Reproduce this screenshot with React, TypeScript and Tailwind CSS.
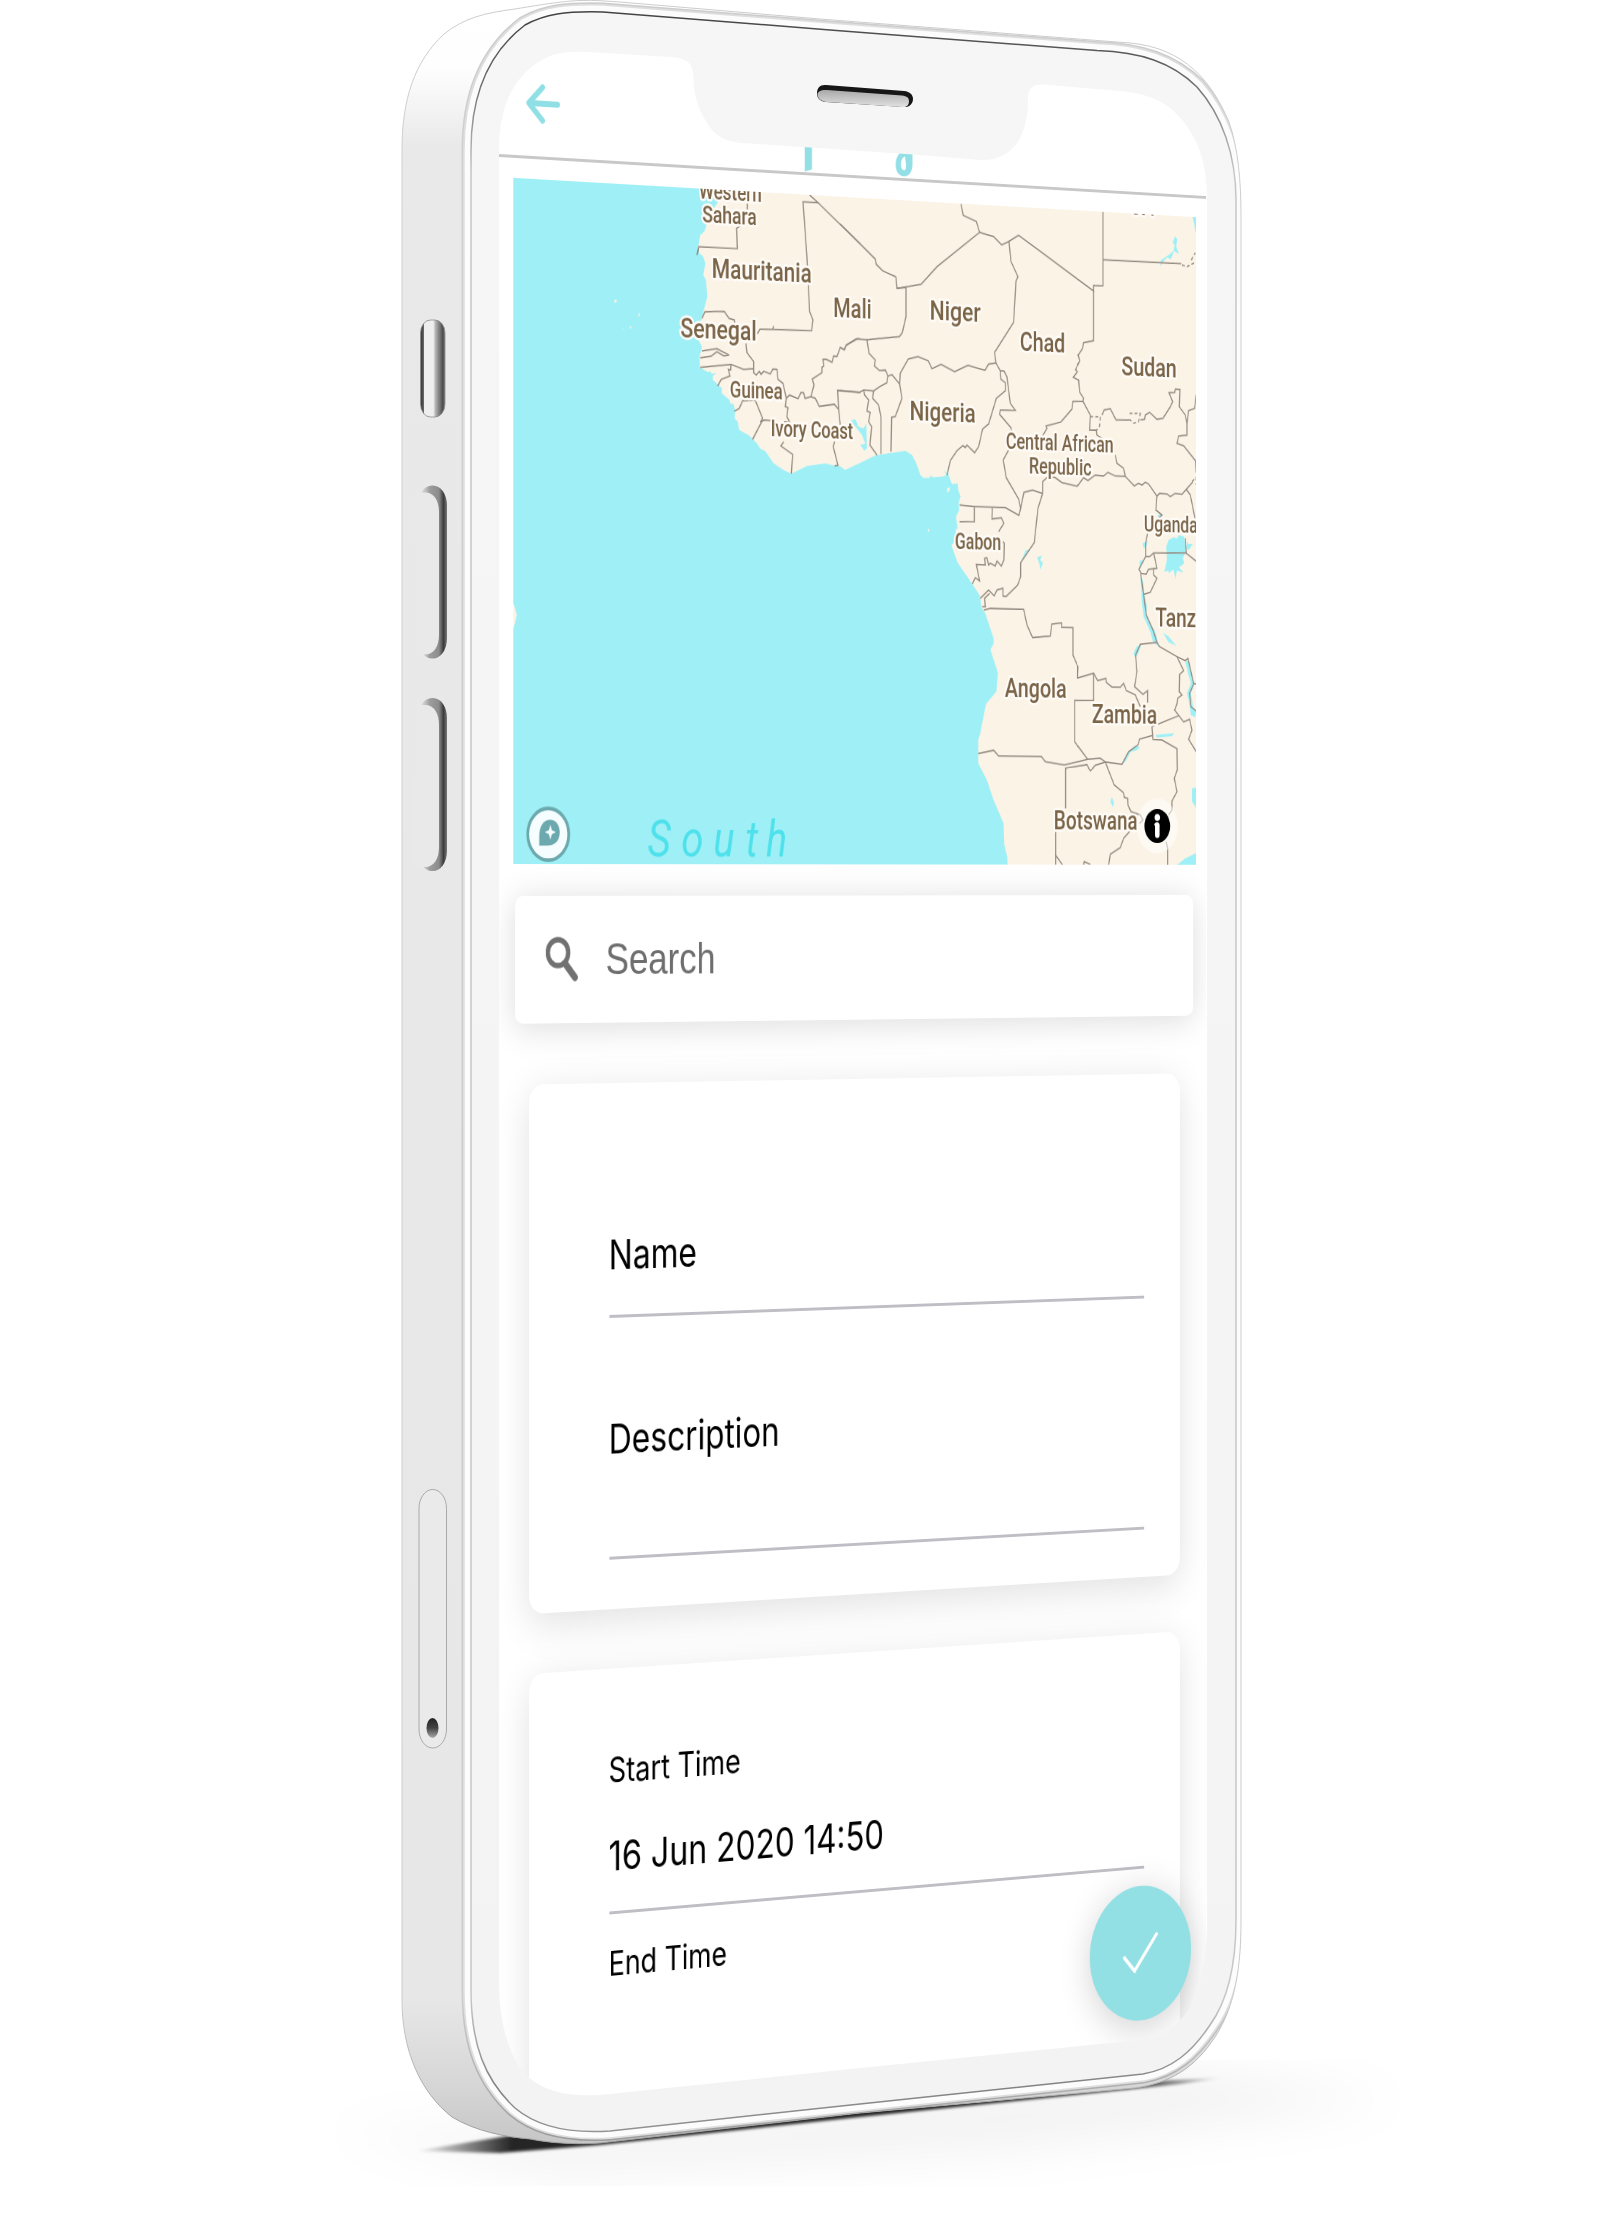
import React from 'react';

/* The screen is a flat 943px wide sheet, turned away from the viewer by one projective matrix. */
const SCREEN_LEFT = 499;
const HORIZON = 878;
const SCALE_X = 0.796;
const DEPTH = 0.00006543;

/* Page position -> position on the flat sheet. */
function flat(px: number, py: number): [number, number] {
  const d = px - SCREEN_LEFT;
  const x = d / (SCALE_X - DEPTH * d);
  const w = 1 + DEPTH * x;
  return [x, HORIZON + (py - HORIZON) * w];
}

type Tile = { x: number; y: number };
const WEST: Tile = { x: 500, y: 170 };
const NORTH: Tile = { x: 840, y: 180 };
const SOUTH: Tile = { x: 860, y: 480 };

/* Tile coordinates are thirds of a pixel from the tile's origin. */
function pts(tile: Tile, list: string): string {
  return list
    .trim()
    .split(/\s+/)
    .map((p) => {
      const [a, b] = p.split(',').map(Number);
      const [x, y] = flat(tile.x + a / 3, tile.y + b / 3);
      return `${x.toFixed(1)},${y.toFixed(1)}`;
    })
    .join(' ');
}

const LAND = [
  pts(WEST, '660,40 656,92 630,130 612,185 600,195 593,230 597,250 608,258 615,280 609,315 617,330 621,380 608,430 590,500 605,530 598,560 599,592 622,606 630,604 635,612 648,608 638,618 638,630 655,645 665,655 664,670 688,690 690,700 700,703 704,722 703,745 712,755 717,780 728,786 745,795 770,820 780,836 795,843 820,880 850,900 873,911 920,888 975,880 1000,886 1018,888 1035,900 1080,876'),
  pts(NORTH, '20,868 105,826 195,812 215,825 228,850 240,885 250,894 268,894 270,886 278,892 305,890 318,886 310,870 325,885 335,912 352,910 354,930 361,950 355,970 357,990 347,1010 352,1045'),
  pts(SOUTH, '286,150 288,180 273,195 292,248 335,310 358,345 365,385 375,400 400,475 400,492 390,508 413,578 408,635 377,672 360,760 354,780 354,850 380,900 400,960 430,1030 432,1095 441,1130 442,1170 1030,1170'),
  pts(NORTH, '1090,40'),
].join(' ');

const BORDERS: [Tile, string[]][] = [
  [WEST, [
    '741,55 741,120',
    '740,150 738,155 709,175 711,236 595,230 590,255',
    '928,75 953,98 908,95 920,260 928,425 938,450 934,482 820,478 779,478 772,490 765,480',
    '817,478 820,468',
    '953,98 1080,222',
    '605,445 614,425 672,424 686,445 702,450 703,462',
    '737,520 740,548 760,575 760,608 768,615 777,604 782,613 790,604 810,612 818,597 830,598 833,628 848,640 858,685 868,675 893,686 902,668 910,668 914,685 932,680 945,685 957,709 1002,703 1015,718',
    '600,592 692,583 730,598 760,596',
    '692,583 691,600 684,598 689,618 663,628 652,648',
    '605,543 650,536 686,555 670,557 650,545 632,559 600,563',
    '932,680 941,645 936,627 965,608 965,592 970,588 968,568 978,568 995,577 1000,558 1010,560 1020,532 1032,540 1038,526 1072,506 1080,507',
    '1080,668 1012,661 1015,718 1020,765',
    '1003,815 999,830 1013,886 1003,888',
    '702,724 717,715 727,692 765,691 787,745 780,757 792,750 812,752',
    '787,750 757,808',
    '858,683 855,710 863,713 860,740 868,757 852,755',
    '850,815 842,828 877,853 873,911',
  ]],
  [NORTH, [
    '0,132 105,237 108,253 127,272 167,291 170,325 242,313 290,260 418,157 408,124 369,106 362,72',
    '0,503 12,508 18,495 48,476 80,479',
    '170,325 197,322 197,410 186,458 177,470 80,479 86,520 105,540 102,558 118,572 135,570 143,588 140,608 118,620 100,633 70,630 58,637 0,632',
    '143,588 155,584 178,612 180,580 204,537 233,530 264,542 275,566 302,553 343,575 383,556 434,571 445,552 467,549 463,517 520,427 527,303 533,290 512,244 506,184 484,195 460,170 418,157',
    '506,184 535,166 760,333 760,317 788,317 788,95',
    '788,239 1023,251',
    '760,333 760,482 730,488 727,505 714,525 718,542 706,570 712,575 699,592 715,600 718,636 730,655 728,664 698,664 695,687 662,726 617,738 620,745 605,770',
    '467,549 480,572 491,573 500,590 510,670 525,691 480,690 478,703 512,743 515,765',
    '480,572 482,598 495,608 495,632 468,655 445,732 427,747 415,800 403,818 380,795 375,803 368,797 350,812 330,842 320,886',
    '178,612 185,655 165,710 154,712 152,815',
    '100,633 97,655 115,675 122,712 122,822',
    '70,630 73,645 85,660 80,693 90,697 85,725 94,740 89,795 110,825',
    '505,810 489,840 498,893 535,957 541,985 551,937 577,930 607,940',
    '541,985 536,1006 495,983 400,980 358,975',
    '358,1025 402,1025 402,982',
    '456,984 455,1017 483,1013 491,1030 475,1055',
    '607,940 607,905 625,888 645,893 665,908 711,919 730,893 743,902 765,885 790,888 803,877 825,888 855,889 850,865 830,850 825,825',
    '728,664 750,705 748,750 768,750 770,765 785,775',
    '785,705 792,690 810,686 827,720 868,720',
    '900,720 913,718 915,705 928,697 950,718 968,715 990,680 997,665 986,638 1003,638 1005,627 1019,628 1017,680 1035,705 1040,730 1040,765 1015,768 1010,790 1030,797 1066,843 1068,878',
    '1040,730 1045,692 1063,685 1068,645',
    '855,889 882,918 895,910 905,915 915,907 925,912 950,948 958,940 980,942 990,950 1005,940 1025,943 1038,928 1058,905',
    '1038,928 1050,945 1064,1015',
    '950,948 947,990 965,1005 955,1015',
  ]],
  [SOUTH, [
    '975,175 978,220 1008,244',
    '880,219 978,219',
    '862,160 856,190 856,230 868,230 880,219 890,265 864,268 858,283 843,280 836,268 856,230',
    '880,268 880,285 890,295 870,337 850,343',
    '841,280 850,343 858,405 878,450 890,487 898,500 950,530 975,542 983,535 1000,610 1008,612',
    '890,487 840,493 826,525 830,575 823,620 848,643 862,632 862,668',
    '950,530 970,572 958,583 957,635 965,645 952,655 950,672 943,690 970,726 988,718 995,750 985,778 1008,815',
    '1000,612 988,640 992,680 1008,693',
    '955,707 875,740 878,778 905,780 950,806 951,870 942,895 950,935 935,963 935,990 925,1005',
    '878,766 838,777 833,795 805,815 785,853 735,846 762,915 790,938 792,952 802,955 803,975 812,995 840,1005 848,1020 838,1030',
    '810,1052 790,1075 780,1103 750,1123 745,1155',
    '918,1085 922,1105 922,1155',
    '371,390 390,385 490,388 500,435 517,473 570,468 575,432 604,429 604,442 638,443 638,525 653,560 652,594 700,580 700,661 643,661 643,785 682,838',
    '700,580 712,602 737,595 738,607 755,621 780,622 790,610 798,632 825,645 840,680',
    '354,821 400,811 415,828 543,829 555,845 612,855 682,838 720,835 735,846',
    '616,985 616,865 680,854 690,873 705,856 735,846',
    '586,1055 586,1155',
    '586,1125 607,1155',
    '670,1155 672,1145 690,1153',
    '547,40 533,85 522,188 481,248 481,290 472,315 437,350 428,348 428,325 410,330 402,348 385,330 360,355',
    '388,340 373,355 375,380 366,380',
    '428,185 432,190 431,240 423,258 410,243 405,258 390,250 385,255 380,233 373,235 375,255 348,253 358,303 345,293 336,312',
  ]],
];

const DASHED: [Tile, string][] = [
  [NORTH, '750,710 780,710 778,738 768,752'],
  [NORTH, '868,700 900,700 895,725 880,730 868,718'],
  [NORTH, '1025,255 1040,260 1060,250 1068,252'],
  [NORTH, '1053,240 1065,218'],
  [NORTH, '1055,905 1068,892 1068,915'],
];

const WATER: [Tile, string][] = [
  [NORTH, '1055,100 1075,100 1075,175 1066,155'],
  [NORTH, '960,260 962,240 985,225 1000,212 1003,195 996,186 1000,182 1004,168 1011,178 1008,200 1016,222 1001,213 992,238 980,232 970,243'],
  [NORTH, '30,722 45,717 55,740 70,745 78,730 80,805 72,812 60,795 75,790 65,765 50,745'],
  [SOUTH, '918,200 925,180 940,172 950,176 955,165 972,170 976,215 968,235 972,250 956,262 970,278 950,272 945,298 940,268 925,280 925,272 912,275 920,240'],
  [SOUTH, '980,185 985,192 998,192 985,210 978,205'],
  [SOUTH, '530,232 545,226 540,240 548,248 540,270 537,250'],
  [SOUTH, '495,212 510,206 480,252'],
  [SOUTH, '840,290 848,300 852,340 860,380 858,405 870,430 885,455 897,502 878,485 870,455 850,410 845,370 843,330'],
  [SOUTH, '847,190 863,183 858,200 850,205'],
  [SOUTH, '838,243 850,238 838,272'],
  [SOUTH, '820,520 828,500 843,495 832,525 825,534'],
  [SOUTH, '975,542 985,545 995,590 1003,610 992,640 998,680 1008,695 1005,712 992,705 985,660 980,640 992,610 983,580'],
  [SOUTH, '908,458 925,470 948,497 925,487'],
  [SOUTH, '785,853 805,815 822,798 840,802 828,812 812,815 795,845'],
  [SOUTH, '885,765 942,760 935,769 890,773'],
  [SOUTH, '755,952 762,970 757,980 750,965'],
  [SOUTH, '890,108 905,98 900,112'],
  [SOUTH, '995,925 1010,922 1010,990 1002,975 995,965'],
  [SOUTH, '950,1155 975,1135 1010,1118 1010,1160 950,1160'],
];

const ISLETS: [Tile, string][] = [
  [WEST, '341,392 348,388 350,394 343,398'],
  [WEST, '413,436 417,430 420,434 415,439'],
  [WEST, '388,470 393,468 393,475 389,475'],
  [WEST, '366,478 371,476 370,480'],
  [NORTH, '319,936 322,924 329,922 327,934'],
  [SOUTH, '202,150 205,146 208,152 205,155'],
];

/* text, left edge, right edge, baseline at the left edge, size */
const LABELS: [string, number, number, number, number][] = [
  ['Western', 700, 761, 198, 23],
  ['Sahara', 703.5, 756, 222.5, 23],
  ['Mauritania', 713, 811, 278, 28],
  ['Senegal', 681.5, 756, 337.5, 28],
  ['Guinea', 731, 782, 397, 23],
  ['Ivory Coast', 772, 852.5, 436.5, 23],
  ['Mali', 834.5, 871, 316.5, 28],
  ['Niger', 931, 980, 320, 28],
  ['Chad', 1021, 1064.5, 351, 28],
  ['Sudan', 1122.5, 1176, 375, 28],
  ['Nigeria', 911, 975, 420.5, 28],
  ['Central African', 1007, 1113, 449, 23],
  ['Republic', 1030, 1091, 473.5, 23],
  ['Egypt', 1122, 1166, 209, 26],
  ['Gabon', 956, 1000.5, 549, 23],
  ['Uganda', 1145, 1197, 531.5, 23],
  ['Tanz', 1156.5, 1195.5, 626.5, 28],
  ['Angola', 1006, 1066, 697, 28],
  ['Zambia', 1093, 1156.5, 722.5, 28],
  ['Botswana', 1055, 1137, 829, 27],
];

function MapView() {
  const [lx, ly] = flat(548, 834.3);
  const [ix, iy] = flat(1157, 826);
  const [sx, sy] = flat(648, 856);
  const bump = [flat(512, 599), flat(516.5, 615), flat(512, 634)].map((p) => p.join(',')).join(' ');
  return (
    <svg className="block h-[687px] w-[911px] shrink-0 bg-[#9ff0f6]" viewBox="17.6 177 911 687">
      <polygon points={LAND} fill="#fbf3e6" />
      <polygon points={bump} fill="#fbf3e6" />
      {ISLETS.map(([t, s]) => (
        <polygon key={s} points={pts(t, s)} fill="#fbf3e6" />
      ))}
      {WATER.map(([t, s]) => (
        <polygon key={s} points={pts(t, s)} fill="#9ff0f6" />
      ))}
      <g fill="none" stroke="#958b82" strokeWidth="1.5">
        {BORDERS.map(([t, list]) => list.map((s) => <polyline key={s} points={pts(t, s)} />))}
        {DASHED.map(([t, s]) => (
          <polyline key={s} points={pts(t, s)} strokeDasharray="4 3" />
        ))}
      </g>
      <g
        fontFamily="Roboto, sans-serif"
        fontWeight="500"
        fill="#7a6448"
        stroke="#fefbf7"
        strokeWidth="5"
        strokeLinejoin="round"
        style={{ paintOrder: 'stroke' }}
      >
        {LABELS.map(([text, x1, x2, y, size]) => {
          const [a, b] = flat(x1, y);
          const [c] = flat(x2, y);
          return (
            <text key={text} x={a - 2} y={b} fontSize={size} textLength={c - a + 2.5} lengthAdjust="spacingAndGlyphs">
              {text}
            </text>
          );
        })}
      </g>
      <text x={sx - 2} y={sy} fontFamily="Roboto, sans-serif" fontStyle="italic" fontWeight="400" fontSize="52" fill="#4fe1eb">
        {['S', 'o', 'u', 't', 'h'].map((ch, i) => (
          <tspan key={ch} x={sx - 1 + [0, 43.5, 85, 127, 154][i]}>
            {ch}
          </tspan>
        ))}
      </text>
      <circle cx={lx} cy={ly} r="26" fill="#f5fdfe" stroke="#6ca9ae" strokeWidth="3.6" />
      <path
        d={`M${lx - 11.5},${ly + 11.5} v-9 c0,-10 5,-17 14,-17 c7,0 12,5.5 12,12.500 c0,9 -7,13.500 -16,13.500 z`}
        fill="#6ca9ae"
      />
      <path
        d={`M${lx + 2.600},${ly - 9.500} l2,5.500 l5,2 l-5,2 l-2,5.500 l-2,-5.500 l-5,-2 l5,-2 z`}
        fill="#f5fdfe"
      />
      <circle cx={ix} cy={iy} r="29" fill="#ffffff" fillOpacity="0.5" />
      <circle cx={ix} cy={iy} r="18" fill="#000000" />
      <circle cx={ix} cy={iy - 9} r="3.800" fill="#ffffff" />
      <path d={`M${ix},${iy - 0.500} v10`} fill="none" stroke="#ffffff" strokeWidth="6.500" strokeLinecap="round" />
      <path d={`M${ix - 2},${iy - 1.500} h2`} fill="none" stroke="#ffffff" strokeWidth="4" strokeLinecap="round" />
    </svg>
  );
}

function Header() {
  const stem = [flat(804.7, 140), flat(812, 140), flat(812, 169.500), flat(804.7, 171.500)].map((p) => p.join(',')).join(' ');
  const [gx, gy] = flat(905, 164);
  return (
    <header className="h-[157px] shrink-0 border-b-[3px] border-[#c8c8c8]">
      <svg className="block h-full w-full" viewBox="0 0 943 154">
        <path d="M74,101 H37.500 M55,84.500 L37.500,101 L55,118" fill="none" stroke="#8fdfe5" strokeWidth="6" strokeLinecap="round" strokeLinejoin="round" />
        <polygon points={stem} fill="#92dfe6" />
        <path
          fillRule="evenodd"
          fill="#92dfe6"
          d={`M${gx - 4},${gy - 13} h14 v13 c0,8 -5,13 -11.500,13 c-7,0 -11,-5 -11,-11.500 c0,-7 4,-12 8.500,-14.500 z M${gx},${gy - 8} c-4,2 -5.500,5.500 -5.500,8.500 c0,4 1.500,6 4.500,6 c2,0 2.500,-2 2.500,-5.500 z`}
        />
      </svg>
    </header>
  );
}

function SearchBar() {
  return (
    <div className="ml-[20px] mt-[32px] flex h-[128px] w-[905px] shrink-0 items-center rounded-[10px] bg-white pl-[39px] shadow-[0_4px_36px_rgba(0,0,0,0.14)]">
      <svg className="h-[46px] w-[42px]" viewBox="0 0 42 46">
        <circle cx="15.500" cy="16" r="13" fill="none" stroke="#717171" strokeWidth="5.500" />
        <path d="M25,27.500 L37,41" stroke="#717171" strokeWidth="7.500" strokeLinecap="round" />
      </svg>
      <span className="ml-[34px] mt-[-1px] font-['Liberation_Sans',sans-serif] text-[45px] leading-none tracking-[-0.1px] text-[#6e6e6e]">Search</span>
    </div>
  );
}

function Field({ label, className }: { label: string; className: string }) {
  return (
    <div className={`border-b-[3px] border-[#bfbec4] leading-[40px] ${className}`}>
      <span className="-ml-px">{label}</span>
    </div>
  );
}

function ConfirmButton() {
  const check = [flat(1124.5, 1958), flat(1134.5, 1971), flat(1156.5, 1934)].map((p) => p.join(',')).join(' ');
  return (
    <button className="absolute left-[780px] top-[1942px] h-[142px] w-[142px] rounded-full bg-[#92dfe4] shadow-[0_8px_44px_rgba(0,0,0,0.18)]">
      <svg className="h-full w-full" viewBox="780 1942 142 142">
        <polyline points={check} fill="none" stroke="#ffffff" strokeWidth="4" strokeLinecap="round" strokeLinejoin="round" />
      </svg>
    </button>
  );
}

function Screen() {
  return (
    <main className="relative ml-[499px] flex h-[2130px] w-[943px] origin-top-left flex-col overflow-hidden bg-white font-['Inter',sans-serif] text-black [grid-area:1/1] [transform:matrix3d(0.796,0.05745,0,0.00006543,0,1,0,0,0,0,1,0,0,0,0,1)]">
      <Header />
      <div className="ml-[17.6px] mt-[20px] flex shrink-0">
        <MapView />
      </div>
      <SearchBar />
      <section className="ml-[38px] mt-[60.500px] h-[531px] w-[868px] shrink-0 rounded-[18px] bg-white pl-[102px] pr-[50px] pt-[153px] shadow-[0_10px_44px_rgba(0,0,0,0.12)]">
        <Field label="Name" className="h-[84px] text-[41px]" />
        <Field label="Description" className="mt-[102px] h-[142px] text-[41px]" />
      </section>
      <section className="ml-[38px] mt-[60px] h-[600px] w-[868px] shrink-0 rounded-[18px] bg-white pl-[102px] pr-[50px] pt-[85px] shadow-[0_10px_44px_rgba(0,0,0,0.12)]">
        <p className="-ml-px text-[35px] leading-[34px]">Start Time</p>
        <Field label="16 Jun 2020 14:50" className="mt-[50px] h-[79px] text-[41.500px]" />
        <p className="-ml-px mt-[33px] text-[34.500px] leading-[34px]">End Time</p>
      </section>
      <ConfirmButton />
    </main>
  );
}

const OUTER =
  'M402,150 C402,100 414,62 444,34 C464,18 484,13 515,9 C545,4 565,1 580,0.500 C595,0 605,1 620,2 L820,19 L1130,43 C1185,48 1212,82 1229,122 C1238,148 1241,180 1241,215 L1241,1920 C1241,1965 1236,2005 1215,2037 C1195,2068 1170,2083 1135,2088 L860,2113 L600,2143 C570,2145 545,2142 530,2139 C505,2137 475,2131 452,2117 C420,2092 402,2050 402,2000 Z';
const FACE =
  'M471,150 C471,90 492,50 525,25 C545,14 565,11 603,12 L830,30 L1097,50.500 C1140,52 1172,62 1197,87 C1222,115 1236,155 1236,200 L1236,1920 C1236,1965 1228,2000 1210,2025 C1192,2052 1172,2069 1143,2074 L860,2104 L610,2131 C565,2134 535,2125 515,2108 C485,2080 471,2045 471,1990 Z';
const HOLE =
  'M499,150 C499,100 518,70 550,56 C562,52 572,51.500 590,52 L670,57 C688,58 693,64 693.500,77 C694,95 697,107 707,123 C716,138 728,142 743,143 L913,154.500 L980,160 C998,161 1010,153 1018,142 C1025,130 1028,115 1028,100 C1028,88 1032,84.500 1043,84.500 L1120,91 C1150,94 1168,102 1183,121 C1200,143 1207,165 1207,200 L1207,1925 C1206,1965 1201,1985 1190,2007 C1178,2028 1160,2038 1140,2040 L860,2068 L600,2095 C565,2097 540,2090 523,2072 C505,2048 499,2015 499,1980 Z';

function VolumeKey({ y }: { y: number }) {
  return (
    <g>
      <rect x="418" y={y} width="29" height="173" rx="14" ry="20" fill="url(#keyShade)" />
      <path d={`M414,${y + 7} h11 c9,0 14,8 14,20 v122 c0,12 -5,20 -14,20 h-11 z`} fill="#e9e9e9" />
    </g>
  );
}

function Device() {
  return (
    <svg className="pointer-events-none relative h-[2225px] w-[1605px] [grid-area:1/1]" viewBox="0 0 1605 2225">
      <defs>
        <linearGradient id="side" gradientUnits="userSpaceOnUse" x1="0" y1="0" x2="0" y2="2150">
          <stop offset="0" stopColor="#ffffff" />
          <stop offset="0.032" stopColor="#fefefe" />
          <stop offset="0.068" stopColor="#e9e9e9" />
          <stop offset="0.93" stopColor="#e7e7e7" />
          <stop offset="0.97" stopColor="#d6d6d6" />
          <stop offset="1" stopColor="#c4c4c4" />
        </linearGradient>
        <linearGradient id="outline" gradientUnits="userSpaceOnUse" x1="0" y1="0" x2="0" y2="2150">
          <stop offset="0" stopColor="#cccccc" />
          <stop offset="0.08" stopColor="#d0d0d0" />
          <stop offset="0.93" stopColor="#cccccc" />
          <stop offset="1" stopColor="#999999" />
        </linearGradient>
        <linearGradient id="seam" gradientUnits="userSpaceOnUse" x1="0" y1="0" x2="0" y2="2150">
          <stop offset="0" stopColor="#3c3c3c" />
          <stop offset="0.035" stopColor="#666666" />
          <stop offset="0.08" stopColor="#c6c6c6" />
          <stop offset="0.93" stopColor="#c6c6c6" />
          <stop offset="0.97" stopColor="#828282" />
          <stop offset="1" stopColor="#9a9a9a" />
        </linearGradient>
        <linearGradient id="glass" x1="0" y1="0" x2="0" y2="1">
          <stop offset="0" stopColor="#f6f6f6" />
          <stop offset="1" stopColor="#f3f3f3" />
        </linearGradient>
        <linearGradient id="keyShade" x1="0" y1="0" x2="1" y2="0">
          <stop offset="0" stopColor="#bbbbbb" stopOpacity="0" />
          <stop offset="0.4" stopColor="#8a8a8a" stopOpacity="0.8" />
          <stop offset="0.72" stopColor="#8c8c8c" />
          <stop offset="0.88" stopColor="#3c3c3c" />
          <stop offset="1" stopColor="#777777" />
        </linearGradient>
        <linearGradient id="muteShade" x1="0" y1="0" x2="1" y2="0">
          <stop offset="0" stopColor="#333333" />
          <stop offset="0.12" stopColor="#5a5a5a" />
          <stop offset="0.16" stopColor="#eeeeee" />
          <stop offset="0.52" stopColor="#eeeeee" />
          <stop offset="0.62" stopColor="#b0b0b0" />
          <stop offset="0.92" stopColor="#4a4a4a" />
          <stop offset="1" stopColor="#7a7a7a" />
        </linearGradient>
        <linearGradient id="speaker" x1="0" y1="0" x2="0" y2="1">
          <stop offset="0" stopColor="#a8a8a8" />
          <stop offset="1" stopColor="#e2e2e2" />
        </linearGradient>
        <linearGradient id="pin" x1="0" y1="0" x2="0" y2="1">
          <stop offset="0" stopColor="#222222" />
          <stop offset="0.5" stopColor="#444444" />
          <stop offset="1" stopColor="#aaaaaa" />
        </linearGradient>
        <linearGradient id="contact" gradientUnits="userSpaceOnUse" x1="415" y1="0" x2="1225" y2="0">
          <stop offset="0" stopColor="#000000" stopOpacity="0" />
          <stop offset="0.12" stopColor="#000000" stopOpacity="0.85" />
          <stop offset="0.88" stopColor="#000000" stopOpacity="0.85" />
          <stop offset="1" stopColor="#000000" stopOpacity="0" />
        </linearGradient>
        <filter id="soft" x="-20%" y="-60%" width="140%" height="220%">
          <feGaussianBlur stdDeviation="1.6" />
        </filter>
        <filter id="wide" x="-30%" y="-100%" width="160%" height="300%">
          <feGaussianBlur stdDeviation="24" />
        </filter>
        <mask id="bodyOnly">
          <rect width="1605" height="2225" fill="#ffffff" />
          <path d={OUTER} fill="#000000" />
        </mask>
        <mask id="frame">
          <rect width="1605" height="2225" fill="#ffffff" />
          <path d={HOLE} fill="#000000" />
        </mask>
        <clipPath id="body">
          <path d={OUTER} />
        </clipPath>
      </defs>

      {/* surroundings, so nothing of the sheet shows outside the body */}
      <path d={`M0,0 H1605 V2225 H0 Z ${OUTER}`} fill="#ffffff" fillRule="evenodd" />
      <g mask="url(#bodyOnly)">
        <path d="M330,2130 L600,2130 L1180,2070 L1400,2100 L1000,2150 L560,2175 Z" fill="#000000" fillOpacity="0.05" filter="url(#wide)" />
        <path d="M415,2151 L520,2134 L860,2108 L1130,2082 L1222,2078 L1180,2084 L860,2117 L600,2145 L500,2153 Z" fill="url(#contact)" filter="url(#soft)" />
      </g>

      <g mask="url(#frame)">
        <path d={OUTER} fill="url(#side)" />
        <g clipPath="url(#body)">
          <path d={FACE} fill="none" stroke="url(#outline)" strokeWidth="19" />
          <path d={FACE} fill="none" stroke="#dedede" strokeWidth="16" />
          <path d={FACE} fill="none" stroke="#fcfcfc" strokeWidth="12.500" />
        </g>
        <path d={FACE} fill="url(#glass)" stroke="url(#seam)" strokeWidth="1.500" />
        <path d={OUTER} fill="none" stroke="url(#outline)" strokeWidth="1" />
      </g>

      <path d="M826,85 L904,91 C910,91.500 913,95 913,99 C913,104 909,107.500 904,107 L826,102 C820,101.500 817,98 817,93.500 C817,88 820,84.500 826,85 Z" fill="#161616" />
      <path d="M827,90 L902,95.500 C907,96 909,98 909,101 C909,105 907,107.500 902,107 L827,102 C821,101.500 817.500,98 817.500,94.500 C817.500,91.500 821,89.600 827,90 Z" fill="url(#speaker)" />

      <rect x="420.500" y="320" width="24.500" height="97" rx="10" ry="13" fill="url(#muteShade)" />
      <rect x="420.500" y="320" width="24.500" height="97" rx="10" ry="13" fill="none" stroke="#8a8a8a" strokeWidth="0.800" />
      <VolumeKey y={485.5} />
      <VolumeKey y={698} />
      <rect x="419" y="1489.500" width="27.500" height="258.500" rx="13.700" ry="19" fill="#eaeaea" stroke="#a3a3a3" strokeWidth="0.900" />
      <ellipse cx="432.500" cy="1728" rx="6" ry="10" fill="url(#pin)" />
    </svg>
  );
}

export default function App() {
  return (
    <div className="grid h-[2225px] w-[1605px] grid-cols-[1605px] grid-rows-[2225px] items-start overflow-hidden bg-white">
      <Screen />
      <Device />
    </div>
  );
}
